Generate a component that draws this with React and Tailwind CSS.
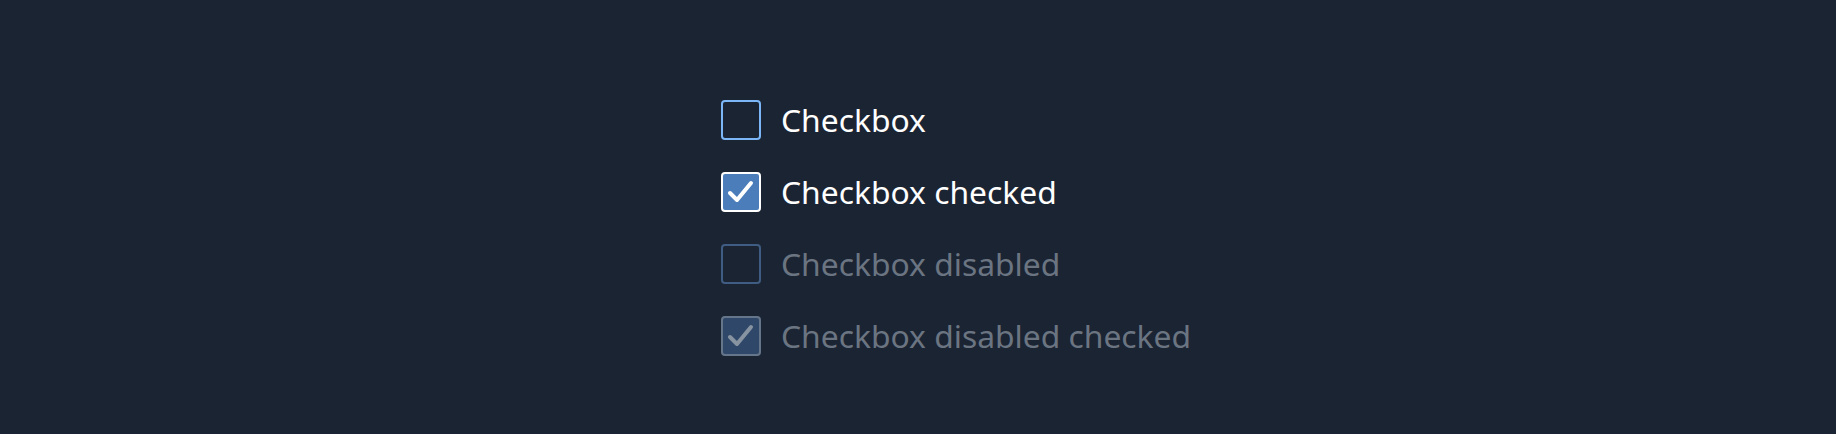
import React from 'react';

const CheckIcon = ({ className }) => (
  <svg viewBox="0 0 36 36" className={className} fill="none">
    <path d="M7 19 L14 26 L28 9" stroke="currentColor" strokeWidth="4" strokeLinecap="round" strokeLinejoin="round" />
  </svg>
);

const Checkbox = ({ label, checked = false, disabled = false }) => {
  let box = 'border-[#7cb6f7] bg-transparent';
  if (checked && !disabled) box = 'border-white bg-[#4a7dba] text-white';
  if (!checked && disabled) box = 'border-[#3f5d82] bg-transparent';
  if (checked && disabled) box = 'border-[#66768a] bg-[#2f4869] text-[#8793a1]';

  return (
    <label className="flex items-center gap-5">
      <span className={`w-10 h-10 rounded-[4px] border-2 flex items-center justify-center ${box}`}>
        {checked && <CheckIcon className="w-9 h-9" />}
      </span>
      <span className={`text-[31.8px] leading-none ${disabled ? 'text-[#6b7582]' : 'text-white'}`}>
        {label}
      </span>
    </label>
  );
};

export default function App() {
  return (
    <div
      className="w-full h-[434px] bg-[#1b2433] pl-[721px] pt-[100px]"
      style={{ fontFamily: '"Noto Sans", "Open Sans", sans-serif' }}
    >
      <div className="flex flex-col gap-8">
        <Checkbox label="Checkbox" />
        <Checkbox label="Checkbox checked" checked />
        <Checkbox label="Checkbox disabled" disabled />
        <Checkbox label="Checkbox disabled checked" checked disabled />
      </div>
    </div>
  );
}
